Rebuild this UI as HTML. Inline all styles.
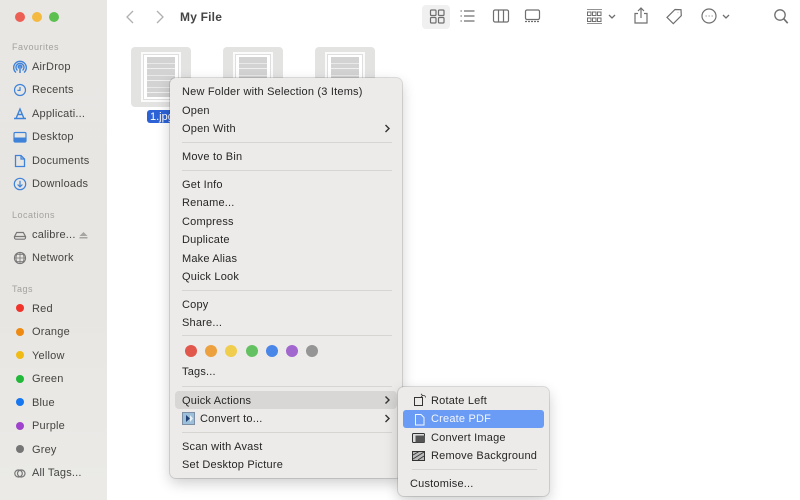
<!DOCTYPE html>
<html><head><meta charset="utf-8"><style>
html,body{margin:0;padding:0;background:#fff}
#r{position:relative;width:800px;height:500px;overflow:hidden;background:#fff;font-family:"Liberation Sans",sans-serif;font-size:11px;color:#3a3a3a;filter:blur(.3px)}
.t{position:absolute;white-space:nowrap;line-height:14px;height:14px;letter-spacing:.2px}
.s{color:#444442;font-size:11px}
.h{color:#a3a29f;font-size:9px;font-weight:normal;letter-spacing:.5px}
.m{color:#262626;font-size:11px}
.dot{position:absolute;border-radius:50%}
.sep{position:absolute;height:1px;background:#d6d5d2}
svg{position:absolute;overflow:visible;fill:none}
.thumb{position:absolute;top:47px;width:60px;height:60px;background:#e3e3e2;border-radius:4px}
.pg{position:absolute;left:10px;top:5px;width:40px;height:50px;background:#fbfbfb}
.pg i{position:absolute;left:2px;top:2px;right:2px;bottom:2px;background:#fff;border:1px solid #dedede}
.pg b{position:absolute;left:6px;top:5px;width:28px;height:40px;background:repeating-linear-gradient(#d3d3d3 0 6px,#e9e9e9 6px 7px,#d3d3d3 7px 11px,#f0f0f0 11px 12px)}
</style></head><body><div id="r">
<div style="position:absolute;left:0;top:0;width:107px;height:500px;background:linear-gradient(#e9e7e4,#e8e6e2 60%,#ebeae7);"></div>
<div class="dot" style="left:15px;top:12px;width:10px;height:10px;background:#ec5f55"></div>
<div class="dot" style="left:32px;top:12px;width:10px;height:10px;background:#f4b93f"></div>
<div class="dot" style="left:49px;top:12px;width:10px;height:10px;background:#5cc051"></div>

<div class="t h" style="left:12px;top:40px">Favourites</div>
<div class="t s" style="left:32px;top:60px">AirDrop</div>
<div class="t s" style="left:32px;top:83px">Recents</div>
<div class="t s" style="left:32px;top:107px">Applicati...</div>
<div class="t s" style="left:32px;top:130px">Desktop</div>
<div class="t s" style="left:32px;top:154px">Documents</div>
<div class="t s" style="left:32px;top:177px">Downloads</div>
<div class="t h" style="left:12px;top:208px">Locations</div>
<div class="t s" style="left:32px;top:228px">calibre...</div>
<div class="t s" style="left:32px;top:251px">Network</div>
<div class="t h" style="left:12px;top:282px">Tags</div>
<div class="t s" style="left:32px;top:302px">Red</div>
<div class="t s" style="left:32px;top:325px">Orange</div>
<div class="t s" style="left:32px;top:349px">Yellow</div>
<div class="t s" style="left:32px;top:372px">Green</div>
<div class="t s" style="left:32px;top:396px">Blue</div>
<div class="t s" style="left:32px;top:419px">Purple</div>
<div class="t s" style="left:32px;top:443px">Grey</div>
<div class="t s" style="left:32px;top:466px">All Tags...</div>

<svg width="107" height="500" style="left:0;top:0" stroke="#3f82d9" stroke-width="1.2">
<path d="M16 72.500a6.300 6.300 0 1 1 8 0M17.500 70.500a4 4 0 1 1 5 0M18.800 68.300a1.800 1.800 0 1 1 2.400 0" stroke-width="1.400"/><path d="M20 66v7" stroke-width="1.500"/>
<circle cx="20" cy="90" r="5.500"/><path d="M20 87v3.400h-2.600"/>
<path d="M14 118.500h12M16 118.500l4-9.500 4 9.500M17.500 114.500h5" stroke-width="1.400"/>
<rect x="14" y="132.500" width="12" height="9.500" rx="1.200"/><rect x="14.500" y="137.500" width="11" height="4" fill="#3f82d9" stroke="none"/>
<path d="M15.500 155.500h5.500l3.500 3.500v7.500h-9z" stroke-width="1.300"/><path d="M21 155.500v3.500h3.500"/>
<circle cx="20" cy="184" r="5.700"/><path d="M20 180.800v5.700M17.600 184.500l2.400 2.400 2.400-2.400"/>
<g stroke="#777"><path d="M14.500 236.500l2.200-4h6.600l2.200 4M14.500 236.500h11v1.200a1.500 1.500 0 0 1-1.500 1.500h-8a1.500 1.500 0 0 1-1.500-1.500z"/>
<circle cx="20" cy="258" r="5.500"/><path d="M14.700 258h10.600M20 252.700v10.600M16 254.500h8M16 261.500h8M17.500 253c-2 3-2 7 0 10M22.500 253c2 3 2 7 0 10" stroke-width=".8"/>
<rect x="14.800" y="470" width="7.500" height="7" rx="3.500"/><rect x="17.500" y="470" width="7.500" height="7" rx="3.500"/></g>
<path d="M79.500 236l4-4 4 4z" fill="#a5a5a3" stroke="none"/><rect x="79.500" y="237" width="8" height="1.500" fill="#a5a5a3" stroke="none"/>
</svg>
<div class="dot" style="left:16px;top:304px;width:8px;height:8px;background:#f0342a"></div>
<div class="dot" style="left:16px;top:328px;width:8px;height:8px;background:#ee8a12"></div>
<div class="dot" style="left:16px;top:351px;width:8px;height:8px;background:#f1bb16"></div>
<div class="dot" style="left:16px;top:375px;width:8px;height:8px;background:#22b83a"></div>
<div class="dot" style="left:16px;top:398px;width:8px;height:8px;background:#1677f0"></div>
<div class="dot" style="left:16px;top:422px;width:8px;height:8px;background:#a043cc"></div>
<div class="dot" style="left:16px;top:445px;width:8px;height:8px;background:#757575"></div>

<svg width="800" height="40" style="left:0;top:0" stroke="#6f6f6f" stroke-width="1.200">
<path d="M133 11l-6 6 6 6M157 11l6 6-6 6" stroke="#b0b0b0" stroke-width="1.300"/>
<rect x="422" y="5" width="28" height="24" rx="4" fill="#f0f0f0" stroke="none"/>
<rect x="430.500" y="10" width="5.500" height="5.500" rx="1"/><rect x="438.500" y="10" width="5.500" height="5.500" rx="1"/>
<rect x="430.500" y="17.500" width="5.500" height="5.500" rx="1"/><rect x="438.500" y="17.500" width="5.500" height="5.500" rx="1"/>
<path d="M464 11h10.500M464 16h10.500M464 21h10.500M460.500 11h1.300M460.500 16h1.300M460.500 21h1.300"/>
<rect x="493.500" y="10" width="15" height="12" rx="1.500"/><path d="M498.500 10v12M503.500 10v12"/>
<rect x="525.500" y="10" width="14" height="9.500" rx="1.500"/><path d="M525 21.500h15" stroke-dasharray="2 1"/>
<path d="M587 9.500h15M587 23.500h15" stroke-width=".8"/>
<rect x="587.500" y="12" width="3.500" height="3.500" stroke-width="1"/><rect x="592.500" y="12" width="3.500" height="3.500" stroke-width="1"/><rect x="597.500" y="12" width="3.500" height="3.500" stroke-width="1"/>
<rect x="587.500" y="18" width="3.500" height="3.500" stroke-width="1"/><rect x="592.500" y="18" width="3.500" height="3.500" stroke-width="1"/><rect x="597.500" y="18" width="3.500" height="3.500" stroke-width="1"/>
<path d="M609 15l3 3 3-3M723 15l3 3 3-3" stroke-width="1.300"/>
<path d="M638 13.500h-3v9.500h12v-9.500h-3M641 18V8.500M638 11l3-3 3 3"/>
<path d="M675 9.500l6 .2.300 6-8 8-6.300-6.300zM677.800 12.500h.4"/>
<circle cx="709" cy="16" r="7"/><path d="M705.700 16h.8M708.700 16h.8M711.700 16h.8" stroke-width="1.300"/>
<circle cx="780" cy="15" r="5.200" stroke-width="1.300"/><path d="M783.700 18.700l4 4.500" stroke-width="1.600"/>
</svg>
<div class="t" style="left:180px;top:10px;font-size:12px;font-weight:bold;color:#444;letter-spacing:.2px">My File</div>

<div class="thumb" style="left:131px"><div class="pg"><i></i><b></b></div></div>
<div class="thumb" style="left:223px"><div class="pg"><i></i><b></b></div></div>
<div class="thumb" style="left:315px"><div class="pg"><i></i><b></b></div></div>
<div style="position:absolute;left:147px;top:110px;width:30px;height:13px;background:#2c62d6;border-radius:3px"></div>
<div class="t" style="left:150px;top:110px;color:#fff;font-size:11px;letter-spacing:0">1.jpg</div>

<div style="position:absolute;left:170px;top:78px;width:232px;height:400px;background:#ecebe9;border:0;border-radius:6px;box-shadow:0 0 0 1px rgba(0,0,0,.12),0 5px 14px rgba(0,0,0,.2)"></div>
<div style="position:absolute;left:175px;top:391px;width:222px;height:18px;background:#d8d7d5;border-radius:4px"></div>
<div class="t m" style="left:182px;top:85px">New Folder with Selection (3 Items)</div>
<div class="t m" style="left:182px;top:104px">Open</div>
<div class="t m" style="left:182px;top:122px">Open With</div>
<div class="sep" style="left:182px;top:142px;width:210px"></div>
<div class="t m" style="left:182px;top:150px">Move to Bin</div>
<div class="sep" style="left:182px;top:170px;width:210px"></div>
<div class="t m" style="left:182px;top:178px">Get Info</div>
<div class="t m" style="left:182px;top:196px">Rename...</div>
<div class="t m" style="left:182px;top:215px">Compress</div>
<div class="t m" style="left:182px;top:233px">Duplicate</div>
<div class="t m" style="left:182px;top:252px">Make Alias</div>
<div class="t m" style="left:182px;top:270px">Quick Look</div>
<div class="sep" style="left:182px;top:290px;width:210px"></div>
<div class="t m" style="left:182px;top:298px">Copy</div>
<div class="t m" style="left:182px;top:316px">Share...</div>
<div class="sep" style="left:182px;top:335px;width:210px"></div>
<div class="dot" style="left:185px;top:345px;width:12px;height:12px;background:#e2574c"></div>
<div class="dot" style="left:205px;top:345px;width:12px;height:12px;background:#eda13e"></div>
<div class="dot" style="left:225px;top:345px;width:12px;height:12px;background:#f1cd4d"></div>
<div class="dot" style="left:246px;top:345px;width:12px;height:12px;background:#64c162"></div>
<div class="dot" style="left:266px;top:345px;width:12px;height:12px;background:#4a86e8"></div>
<div class="dot" style="left:286px;top:345px;width:12px;height:12px;background:#a266cf"></div>
<div class="dot" style="left:306px;top:345px;width:12px;height:12px;background:#959595"></div>
<div class="t m" style="left:182px;top:365px">Tags...</div>
<div class="sep" style="left:182px;top:386px;width:210px"></div>
<div class="t m" style="left:182px;top:394px">Quick Actions</div>
<div style="position:absolute;left:182px;top:412px;width:13px;height:13px;background:#9cc0dc;border:1px solid #7d8fa5;box-sizing:border-box"></div>
<svg width="13" height="13" style="left:182px;top:412px"><path d="M4 3l4 3.500-4 3.500z" fill="#1e3f70"/><path d="M8 3l3 3.500-3 3.500z" fill="#e8f0f4"/></svg>
<div class="t m" style="left:200px;top:412px">Convert to...</div>
<div class="sep" style="left:182px;top:432px;width:210px"></div>
<div class="t m" style="left:182px;top:440px">Scan with Avast</div>
<div class="t m" style="left:182px;top:458px">Set Desktop Picture</div>
<svg width="800" height="500" style="left:0;top:0" stroke="#333" stroke-width="1.400">
<path d="M385.500 125l3.500 3.500-3.500 3.500M385.500 396.500l3.500 3.500-3.500 3.500M385.500 415l3.500 3.500-3.500 3.500"/>
</svg>

<div style="position:absolute;left:398px;top:387px;width:151px;height:109px;background:#ecebe9;border-radius:6px;box-shadow:0 0 0 1px rgba(0,0,0,.12),0 5px 14px rgba(0,0,0,.2)"></div>
<div style="position:absolute;left:403px;top:410px;width:141px;height:18px;background:#6b9cf5;border-radius:3px"></div>
<div class="t m" style="left:431px;top:394px">Rotate Left</div>
<div class="t m" style="left:431px;top:412px;color:#f3f6fe">Create PDF</div>
<div class="t m" style="left:431px;top:431px">Convert Image</div>
<div class="t m" style="left:431px;top:449px">Remove Background</div>
<div class="sep" style="left:412px;top:469px;width:125px"></div>
<div class="t m" style="left:410px;top:477px">Customise...</div>
<svg width="800" height="500" style="left:0;top:0" stroke="#333" stroke-width="1">
<rect x="414.500" y="397.500" width="8" height="8"/><path d="M422 395.500h1.500a2 2 0 0 1 2 2M421 393.800l1.500 1.700-1.500 1.700" stroke-width=".8"/>
<path d="M415.500 414.500h5.500l3 3v7.500h-8.500z" stroke="#f3f6fe"/>
<rect x="412.500" y="433.500" width="12" height="9" rx="1" fill="#ddd"/><rect x="415.500" y="435.500" width="9.500" height="7" fill="#555" stroke="none"/>
<rect x="412.500" y="451.500" width="12" height="9" fill="#bbb"/><path d="M413 459l11-7M413 455l6-3.500M418 460l6-4" stroke-width=".8"/>
</svg>
</div></body></html>
